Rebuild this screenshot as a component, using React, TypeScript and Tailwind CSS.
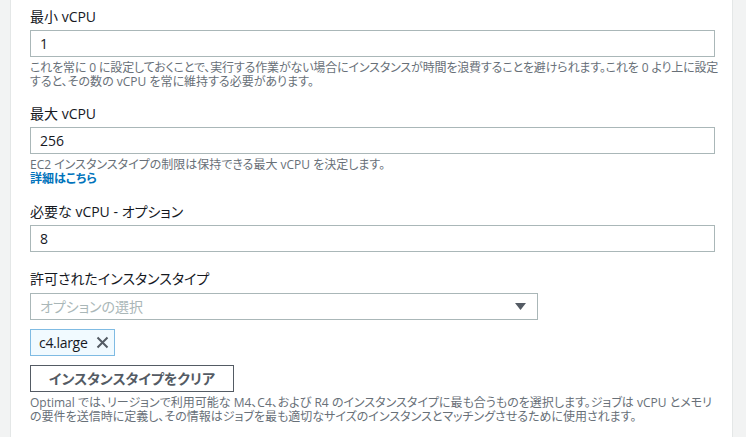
import type { ReactNode } from 'react';

function Label({ children }: { children: ReactNode }) {
  return <div className="text-[14px] leading-[20px] text-[#16191f]">{children}</div>;
}

function Help({ children }: { children: ReactNode }) {
  return (
    <div className="mt-1 whitespace-nowrap text-[12px] leading-[14px] text-[#687078]">
      {children}
    </div>
  );
}

function TextInput({ value }: { value: string }) {
  return (
    <div className="mt-[3px] flex h-[27px] items-center border border-[#aab7b8] bg-white pl-[9px] text-[14px] text-[#16191f]">
      {value}
    </div>
  );
}

export default function App() {
  return (
    <div className="flex h-screen w-full overflow-hidden bg-[#f2f3f3] font-['Open_Sans','Noto_Sans_CJK_JP',sans-serif] [font-feature-settings:'palt']">
      <div className="w-[11px] shrink-0 border-r border-[#e4e7e7] bg-[#f2f3f3]" />

      <div className="min-w-0 flex-1 bg-white pl-[19px] pr-[17px] pt-[7px]">
        {/* min vCPU */}
        <Label>最小 vCPU</Label>
        <TextInput value="1" />
        <Help>
          <span className="tracking-[-0.15px]">
            これを常に 0 に設定しておくことで、実行する作業がない場合にインスタンスが時間を浪費することを避けられます。これを 0 より上に設定
          </span>
          <br />
          すると、その数の vCPU を常に維持する必要があります。
        </Help>

        {/* max vCPU */}
        <div className="mt-[15px]">
          <Label>最大 vCPU</Label>
          <TextInput value="256" />
          <Help>
            EC2 インスタンスタイプの制限は保持できる最大 vCPU を決定します。
            <br />
            <a className="font-bold text-[#0073bb]">詳細はこちら</a>
          </Help>
        </div>

        {/* desired vCPU */}
        <div className="mt-[16px]">
          <Label>必要な vCPU - オプション</Label>
          <TextInput value="8" />
        </div>

        {/* instance types */}
        <div className="mt-[17px]">
          <Label>許可されたインスタンスタイプ</Label>
          <div className="mt-[4px] flex h-[27px] w-[508px] items-center justify-between border border-[#aab7b8] bg-white pl-[9px] pr-[11px]">
            <span className="text-[14px] text-[#aab7b8]">オプションの選択</span>
            <svg width="11" height="7" viewBox="0 0 11 7">
              <path d="M0 0h11L5.5 7z" fill="#545b64" />
            </svg>
          </div>

          <div className="mt-[9px] inline-flex h-[27px] items-center gap-[8px] border border-[#7fbbe3] bg-[#f1faff] pl-[8px] pr-[5px]">
            <span className="text-[14px] tracking-[-0.3px] text-[#16191f]">c4.large</span>
            <svg width="13" height="13" viewBox="0 0 13 13">
              <path d="M1.5 1.5l10 10M11.5 1.5l-10 10" stroke="#545b64" strokeWidth="2" fill="none" />
            </svg>
          </div>

          <div className="mt-[9px]">
            <button className="flex h-[27px] w-[204px] items-center justify-center border border-[#545b64] bg-white text-[14px] font-bold text-[#545b64]">
              インスタンスタイプをクリア
            </button>
          </div>

          <Help>
            Optimal では、リージョンで利用可能な M4、C4、および R4 のインスタンスタイプに最も合うものを選択します。ジョブは vCPU とメモリ
            <br />
            の要件を送信時に定義し、その情報はジョブを最も適切なサイズのインスタンスとマッチングさせるために使用されます。
          </Help>
        </div>
      </div>

      <div className="w-[14px] shrink-0 border-l border-[#e4e7e7] bg-[#f2f3f3]" />
    </div>
  );
}
